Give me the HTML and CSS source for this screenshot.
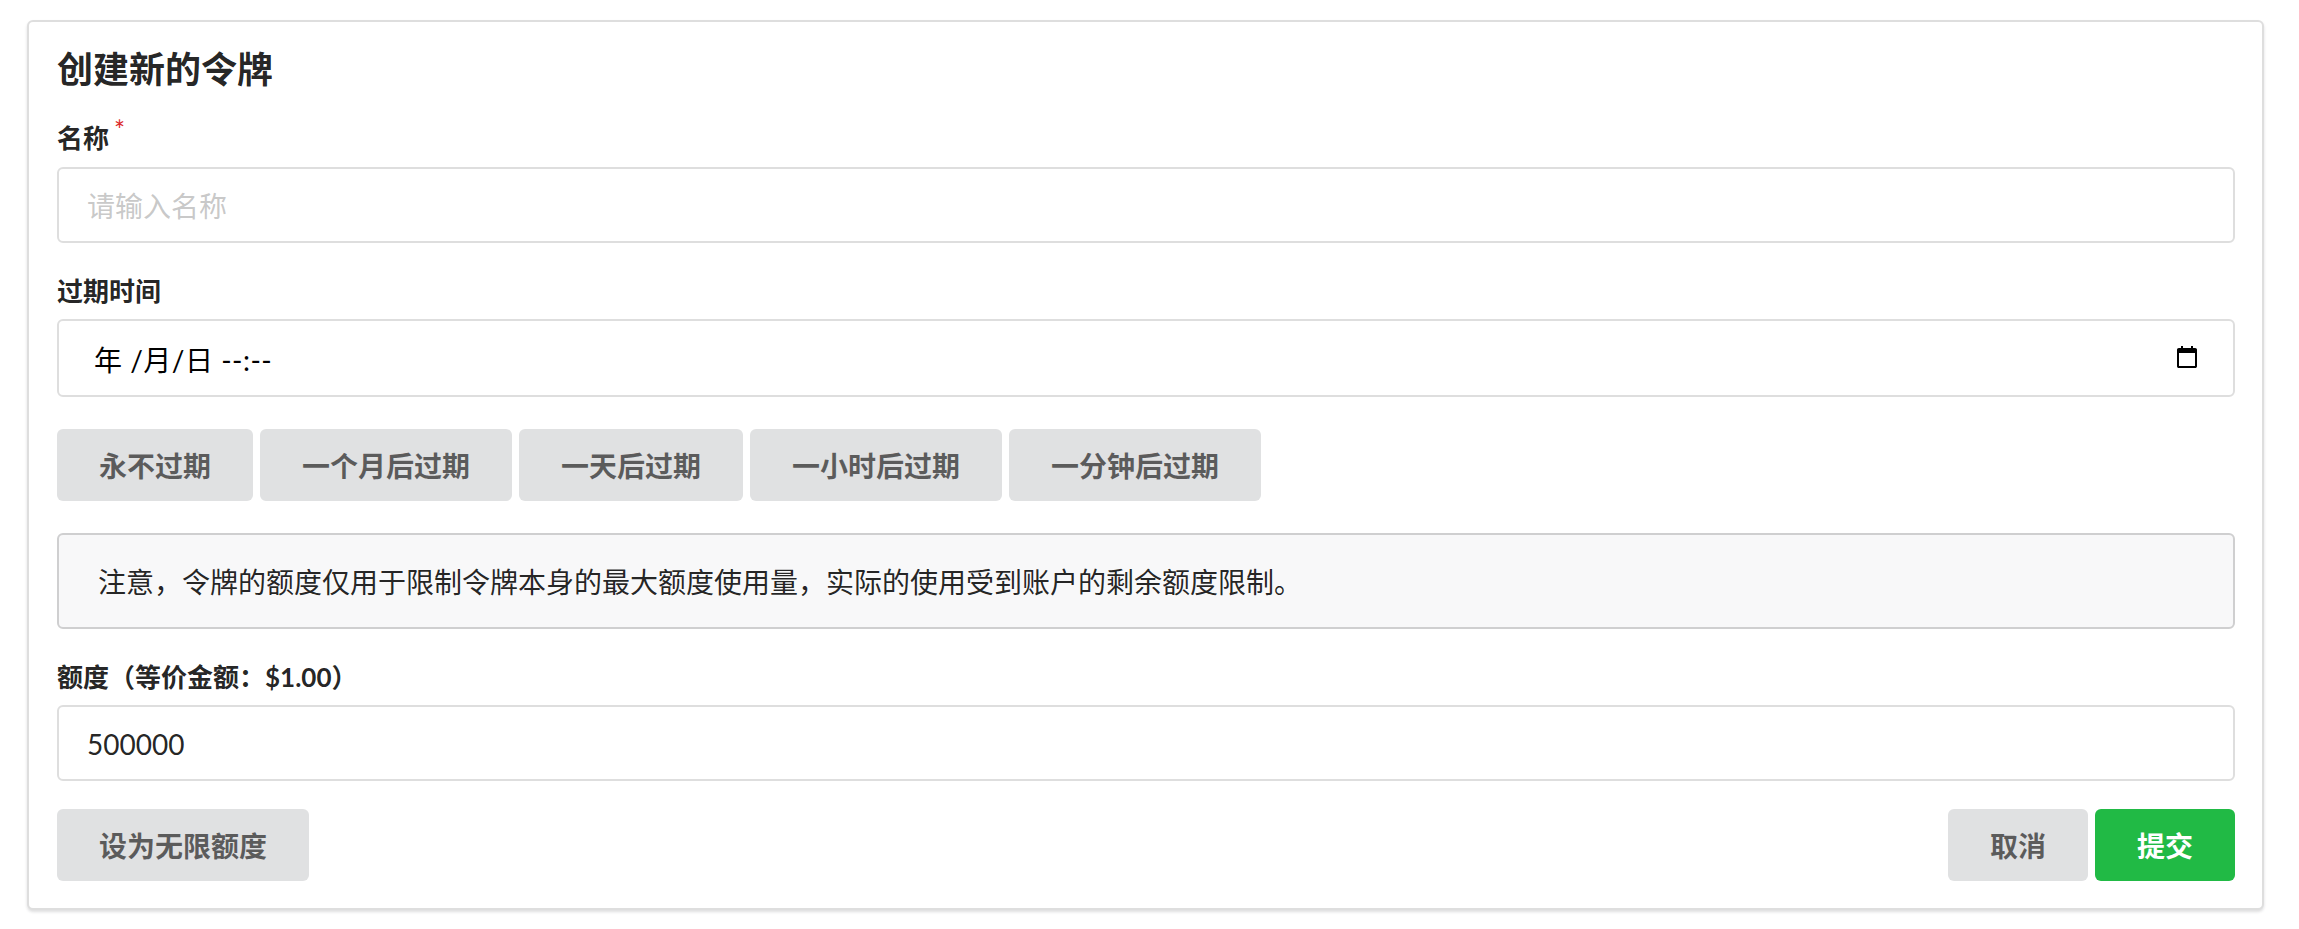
FILE: index.html
```html
<!DOCTYPE html>
<html lang="zh-CN">
<head>
<meta charset="utf-8">
<title>创建新的令牌</title>
<link rel="stylesheet" href="styles.css">
</head>
<body>
<main class="card">
  <h3 class="title">创建新的令牌</h3>
  <form class="form">
    <div class="field">
      <label class="label required" for="name">名称</label>
      <input class="input" id="name" type="text" placeholder="请输入名称">
    </div>
    <div class="field">
      <label class="label">过期时间</label>
      <div class="input date">
        <span class="date-text">年 /月/日 --:--</span>
        <svg class="cal" width="24" height="24" viewBox="0 0 24 24" aria-hidden="true"><path d="M7 1v3M17 1v3" stroke="#000" stroke-width="2" fill="none"/><path fill-rule="evenodd" d="M3.800 3h16.400c1 0 1.800.8 1.800 1.800v16.400c0 1-.8 1.800-1.800 1.800H3.800c-1 0-1.800-.8-1.800-1.800V4.800c0-1 .8-1.800 1.800-1.800zM4 8v13h16V8z"/></svg>
      </div>
    </div>
    <div class="btn-row">
      <button type="button" class="btn">永不过期</button>
      <button type="button" class="btn">一个月后过期</button>
      <button type="button" class="btn">一天后过期</button>
      <button type="button" class="btn">一小时后过期</button>
      <button type="button" class="btn">一分钟后过期</button>
    </div>
    <div class="message">注意，令牌的额度仅用于限制令牌本身的最大额度使用量，实际的使用受到账户的剩余额度限制。</div>
    <div class="field">
      <label class="label" for="quota">额度（等价金额：$1.00）</label>
      <input class="input" id="quota" type="text" value="500000">
    </div>
    <div class="actions">
      <button type="button" class="btn">设为无限额度</button>
      <div class="actions-right">
        <button type="button" class="btn">取消</button>
        <button type="button" class="btn primary">提交</button>
      </div>
    </div>
  </form>
</main>
</body>
</html>
```
FILE: styles.css
```css
* { box-sizing: border-box; }
html, body { margin: 0; height: 100%; background: #fff; }
body {
  padding: 20px 35px 0 27px;
  font-family: Lato, "Noto Sans CJK SC", "Helvetica Neue", Arial, sans-serif;
  font-size: 28px;
  color: rgba(0, 0, 0, .87);
}
.card {
  height: 890px;
  padding: 27px 27px 27px 28px;
  background: #fff;
  border: 2px solid #dedede;
  border-radius: 6px;
  box-shadow: 0 2px 3px rgba(34, 36, 38, .15);
}
.title {
  margin: 0;
  height: 40px;
  font-size: 36px;
  line-height: 40px;
  font-weight: 700;
}
.form { display: flex; flex-direction: column; }
.field { display: flex; flex-direction: column; }
.field:first-child { margin-top: 36px; }
.field:first-child .label { margin-bottom: 16px; }
.field + .field { margin-top: 35px; }
.label {
  height: 26px;
  margin-bottom: 15px;
  font-size: 26px;
  line-height: 26px;
  font-weight: 700;
}
.required::after {
  content: "*";
  margin-left: 5px;
  color: #db2828;
  position: relative;
  top: -8px;
  font-weight: 400;
}
.input {
  width: 100%;
  height: 76px;
  padding: 2px 28px 0;
  font: inherit;
  color: rgba(0, 0, 0, .87);
  background: #fff;
  border: 2px solid #dedede;
  border-radius: 6px;
  outline: none;
}
.input::placeholder { color: rgba(191, 191, 191, .87); opacity: 1; }
.date {
  height: 78px;
  display: flex;
  align-items: center;
  justify-content: space-between;
  padding: 2px 34px 0 35px;
  color: #000;
}
.date-text { letter-spacing: .5px; }
.cal { display: block; margin-top: -5px; }
.btn-row { display: flex; gap: 7px; margin-top: 32px; }
.btn {
  height: 72px;
  padding: 0 42px;
  font: inherit;
  font-weight: 700;
  color: rgba(0, 0, 0, .6);
  background: #e0e1e2;
  border: 0;
  border-radius: 6px;
}
.primary { background: #21ba45; color: #fff; }
.message {
  height: 96px;
  margin-top: 32px;
  margin-bottom: 35px;
  padding: 0 39px;
  display: flex;
  align-items: center;
  background: #f8f8f9;
  border: 2px solid #cfcfd0;
  border-radius: 6px;
}
.message + .field { margin-top: 0; }
.actions { display: flex; justify-content: space-between; margin-top: 28px; }
.actions-right { display: flex; gap: 7px; }
```
